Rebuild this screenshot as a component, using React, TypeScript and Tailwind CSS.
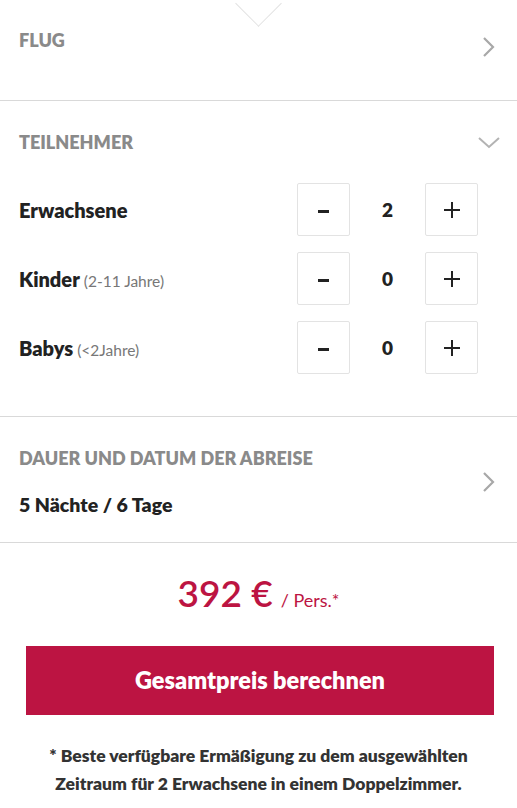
import { useState } from "react";

const font = { fontFamily: '"Source Sans Pro", Lato, "Liberation Sans", sans-serif' };

function ChevronRight() {
  return (
    <svg width="14" height="22" viewBox="0 0 14 22" fill="none">
      <path d="M2 2l9 9-9 9" stroke="#a8a8a8" strokeWidth="2.2" />
    </svg>
  );
}

function ChevronDown() {
  return (
    <svg width="22" height="12" viewBox="0 0 22 12" fill="none">
      <path d="M1 1l10 9 10-9" stroke="#b3b3b3" strokeWidth="2" />
    </svg>
  );
}

function Counter({ label, hint, value, onChange }: { label: string; hint?: string; value: number; onChange: (v: number) => void }) {
  return (
    <div className="flex items-center justify-between h-[53px]">
      <div className="text-[20px] font-extrabold text-[#222]">
        {label}
        {hint && <span className="ml-1 text-[15.5px] font-normal text-[#777]">{hint}</span>}
      </div>
      <div className="flex items-center mr-[20px]">
        <button
          onClick={() => onChange(Math.max(0, value - 1))}
          className="w-[53px] h-[53px] border border-[#e3e3e3] rounded-[2px] flex items-center justify-center"
        >
          <span className="block w-[11px] h-[3px] bg-[#222] mt-[4px]" />
        </button>
        <span className="w-[75px] text-center text-[19px] font-extrabold text-[#222] pt-[2px]">{value}</span>
        <button
          onClick={() => onChange(value + 1)}
          className="w-[53px] h-[53px] border border-[#e3e3e3] rounded-[2px] flex items-center justify-center"
        >
          <svg width="16" height="16" viewBox="0 0 16 16">
            <path d="M8 0v16M0 8h16" stroke="#222" strokeWidth="2" />
          </svg>
        </button>
      </div>
    </div>
  );
}

export default function App() {
  const [adults, setAdults] = useState(2);
  const [kids, setKids] = useState(0);
  const [babies, setBabies] = useState(0);

  return (
    <div className="relative w-[517px] min-h-[808px] bg-white overflow-hidden" style={font}>
      {/* notch from section above */}
      <div className="absolute left-[242px] top-[-13px] w-[33px] h-[33px] rotate-45 border-r border-b border-[#e2e2e2] bg-white" />

      {/* Flug */}
      <div className="flex items-start justify-between px-[19px] pt-[27px] h-[101px] border-b border-[#d9d9d9]">
        <h2 className="text-[18px] font-extrabold uppercase text-[#8a8a8a]">Flug</h2>
        <div className="mt-[9px] mr-[2px]">
          <ChevronRight />
        </div>
      </div>

      {/* Teilnehmer */}
      <div className="px-[19px] pt-[28px] pb-[42px] border-b border-[#d9d9d9]">
        <div className="flex items-center justify-between">
          <h2 className="text-[18px] font-extrabold uppercase text-[#8a8a8a]">Teilnehmer</h2>
          <div className="mr-[-2px]">
            <ChevronDown />
          </div>
        </div>
        <div className="mt-[27px] flex flex-col gap-[16px]">
          <Counter label="Erwachsene" value={adults} onChange={setAdults} />
          <Counter label="Kinder" hint="(2-11 Jahre)" value={kids} onChange={setKids} />
          <Counter label="Babys" hint="(<2Jahre)" value={babies} onChange={setBabies} />
        </div>
      </div>

      {/* Dauer */}
      <div className="flex items-center justify-between px-[19px] pt-[28px] pb-[23px] border-b border-[#d9d9d9]">
        <div>
          <h2 className="text-[18px] font-extrabold uppercase text-[#8a8a8a]">Dauer und Datum der Abreise</h2>
          <p className="mt-[18px] text-[19.5px] font-extrabold text-[#222]">5 Nächte / 6 Tage</p>
        </div>
        <div className="mr-[2px]">
          <ChevronRight />
        </div>
      </div>

      {/* Preis */}
      <div className="pt-[31px] pb-[20px] flex flex-col items-center">
        <div className="text-[#bc1442] leading-none">
          <span className="text-[37px] font-semibold">392 €</span>
          <span className="ml-[8px] text-[18px]">/ Pers.*</span>
        </div>
        <button className="mt-[35px] self-start ml-[26px] w-[468px] h-[69px] bg-[#bc1442] text-white text-[23.5px] font-extrabold">
          Gesamtpreis berechnen
        </button>
        <p className="mt-[27px] text-center text-[17.5px] font-extrabold text-[#333] leading-[28px]">
          * Beste verfügbare Ermäßigung zu dem ausgewählten
          <br />
          Zeitraum für 2 Erwachsene in einem Doppelzimmer.
        </p>
      </div>
    </div>
  );
}
